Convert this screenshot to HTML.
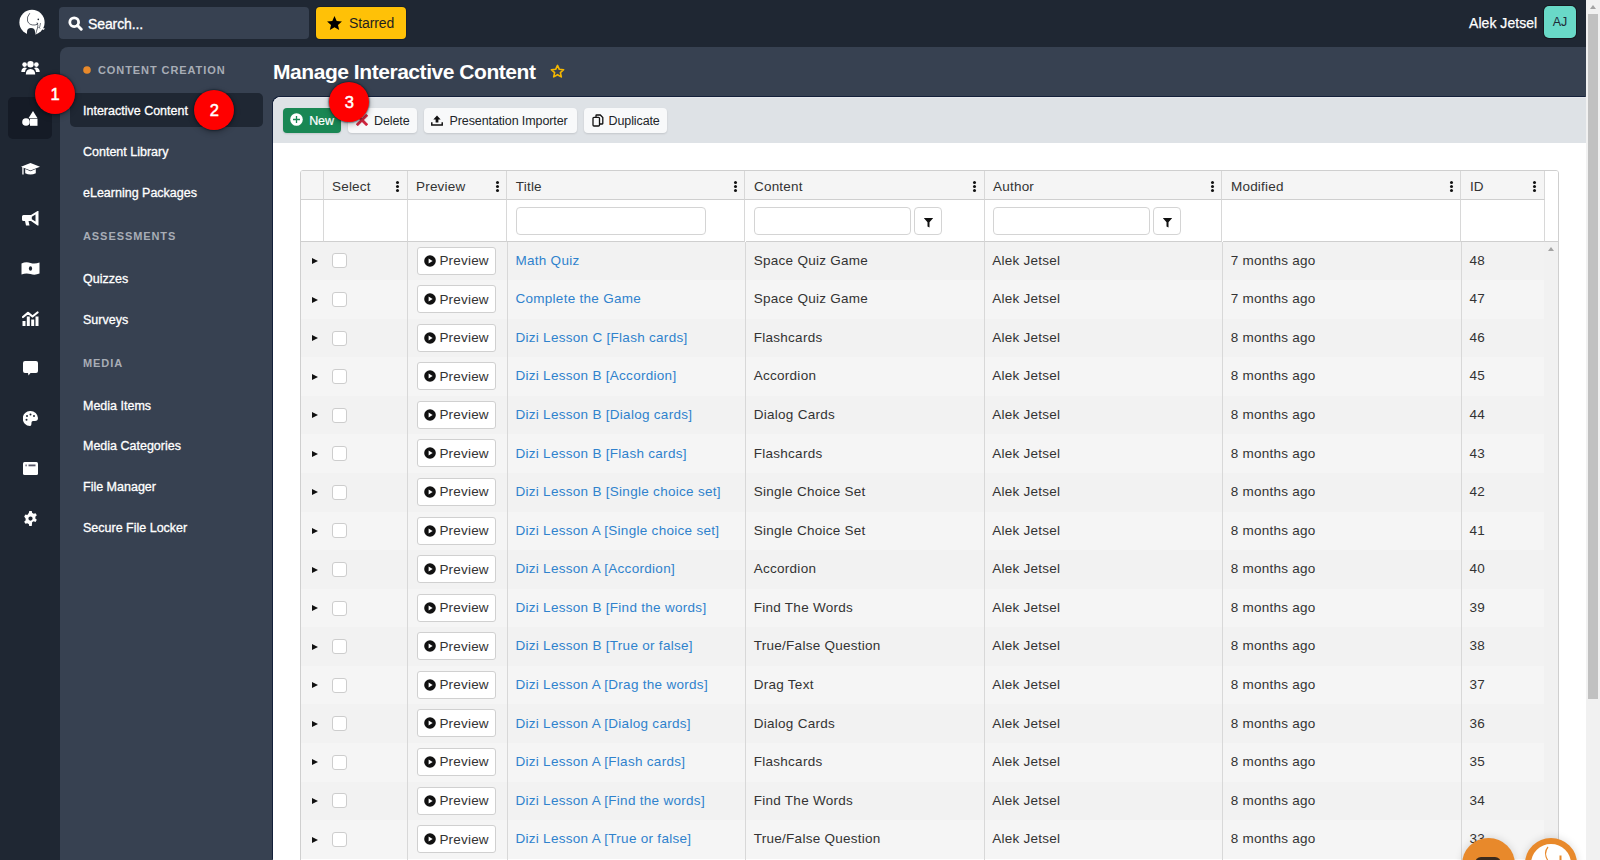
<!DOCTYPE html><html><head><meta charset="utf-8"><title>Manage Interactive Content</title><style>
*{box-sizing:border-box;margin:0;padding:0}
html,body{width:1600px;height:860px;overflow:hidden;background:#1f2733;font-family:"Liberation Sans",sans-serif}
.abs{position:absolute}
#rail{left:0;top:0;width:60px;height:860px;background:#1f2733}
#topbar{left:0;top:0;width:1586px;height:47px;background:#1f2733}
#panel{left:60px;top:47px;width:1526px;height:813px;background:#374151;border-top-left-radius:8px}
.search{left:59px;top:7px;width:250px;height:32px;background:#374151;border-radius:4px}
.search span{position:absolute;left:29px;top:7.7px;font-size:14px;color:#fff;-webkit-text-stroke:0.3px #fff;letter-spacing:-0.1px;line-height:18px}
.starred{left:316px;top:7px;width:90px;height:32px;background:#ffc107;border-radius:4px;box-shadow:0 0 0 1px #18202c}
.starred span{position:absolute;left:33px;top:7px;font-size:14px;color:#1f1f1f;letter-spacing:-0.1px;line-height:18px}
.uname{left:1469px;top:14px;font-size:14px;color:#fff;line-height:18px;letter-spacing:0.05px;-webkit-text-stroke:0.25px #fff}
.avatar{left:1544px;top:6.2px;width:32px;height:32px;background:#69d9c8;border-radius:5px;box-shadow:0 0 0 1px #16181f;color:#1f2937;font-size:12.5px;line-height:33px;text-align:center}
.activebox{left:8px;top:97px;width:44px;height:42px;background:#151b26;border-radius:5px}
.ic{position:absolute}
.sechead{position:absolute;left:83px;font-size:11px;font-weight:bold;color:#a8adb6;letter-spacing:0.92px;line-height:12px}
.nav{position:absolute;left:83px;font-size:12.5px;color:#fff;-webkit-text-stroke:0.3px #fff;letter-spacing:0px;line-height:14px}
.navact{left:70px;top:93px;width:193px;height:34px;background:#1f2733;border-radius:5px}
.title{left:273px;top:59.5px;font-size:21px;font-weight:bold;color:#fff;letter-spacing:-0.45px;line-height:24px}
#card{left:273px;top:97px;width:1313px;height:763px;background:#fff;border-top-left-radius:8px;box-shadow:-1px -1px 0 #14203a}
#toolbar{left:273px;top:97px;width:1313px;height:46px;background:#dee2e6;border-top-left-radius:8px;box-shadow:inset 0 1px 0 #e6e8ec}
.btn{position:absolute;top:107.5px;height:25px;border-radius:4px;background:#f8f9fa;box-shadow:0 1px 2px rgba(0,0,0,0.12);font-size:12.5px;color:#212529;line-height:25px;letter-spacing:-0.1px}
.btn span{position:absolute;top:0}
#tbl{left:300px;top:170px;width:1259px;height:700px;border:1px solid #cfcfcf;border-radius:3px;background:#fff;overflow:hidden}
.hdr{position:absolute;top:0;height:29px;background:#f5f5f5;border-bottom:1px solid #cfcfcf}
.hcell{position:absolute;top:0;height:29px;border-right:1px solid #d8d8d8;}
.htext{position:absolute;left:8.5px;top:7.5px;font-size:13.5px;color:#333;letter-spacing:0.2px;line-height:16px}
.keb{position:absolute;top:10px;width:3px;height:11px}
.keb i{position:absolute;left:0;width:3px;height:3px;border-radius:50%;background:#111}
.fcell{position:absolute;top:29px;height:42px;border-right:1px solid #d8d8d8;border-bottom:1px solid #cfcfcf}
.finput{position:absolute;top:7px;height:27.5px;border:1px solid #d4d4d4;border-radius:4px;background:#fff}
.fbtn{position:absolute;top:7px;height:27.5px;width:28px;border:1px solid #d4d4d4;border-radius:4px;background:#fff}
.row{position:absolute;left:0;width:1243px}
.rc{position:absolute;top:0;bottom:0}
.rt{position:absolute;font-size:13.5px;color:#333;letter-spacing:0.26px;line-height:16px}
.link{color:#2f82cd;letter-spacing:0.29px}
.vline{position:absolute;width:1px;background:#d8d8d8}
.tri{position:absolute;width:0;height:0;border-left:6.5px solid #111;border-top:3.5px solid transparent;border-bottom:3.5px solid transparent}
.cb{position:absolute;width:15px;height:15px;border:1px solid #cdcdcd;border-radius:3px;background:#fff}
.pbtn{position:absolute;width:78.8px;height:28px;border:1px solid #d0d0d0;border-radius:3px;background:#fff}
.pbtn span{position:absolute;left:21.5px;top:5.5px;font-size:13.5px;color:#333;letter-spacing:0.2px;line-height:16px}
.badge{position:absolute;width:40px;height:40px;border-radius:50%;background:#f00;color:#fff;font-size:16.5px;-webkit-text-stroke:0.5px #fff;text-align:center;line-height:40px;box-shadow:0 0 1.5px 1px rgba(0,20,30,0.45),0 2px 6px rgba(0,0,0,0.3)}
#sb{left:1586px;top:0;width:14px;height:860px;background:#f1f1f1}
#thumb{left:1588px;top:14px;width:10px;height:685px;background:#c1c1c1}
</style></head><body><div class="abs" id="rail"></div><div class="abs" id="topbar"></div><div class="abs" id="panel"></div><svg class="abs" style="left:16px;top:6px" width="32" height="32" viewBox="0 0 32 32">
<circle cx="16" cy="16.4" r="12.6" fill="#fff"/>
<path d="M11 29.5 V26 Q11 22 15 22 Q19 22 19 26 V29.5Z" fill="#1f2733"/>
<path d="M13.8 7.2 Q10.5 11 11.5 15 Q13 19.5 19 19 Q21.5 18.8 22 17" fill="none" stroke="#1f2733" stroke-width="0.7"/>
<circle cx="22.3" cy="13.4" r="0.8" fill="#1f2733"/>
<path d="M21 16.5 Q22.5 20 21.5 22 Q20.5 25 19.5 28.5" fill="none" stroke="#1f2733" stroke-width="0.7"/>
<path d="M24.5 17 Q24 20 23.5 21.5" fill="none" stroke="#1f2733" stroke-width="0.6"/>
<path d="M23.5 21.5 L29 22.5 L27.5 24 Z" fill="#fff"/>
<path d="M22.5 21 L24 22.5" fill="none" stroke="#1f2733" stroke-width="0.8"/>
</svg><div class="abs search"><svg class="abs" style="left:9px;top:8.5px" width="15" height="15" viewBox="0 0 15 15"><circle cx="6.2" cy="6.2" r="4.4" fill="none" stroke="#fff" stroke-width="2.8"/><path d="M9.5 9.5 L13.2 13.2" stroke="#fff" stroke-width="3" stroke-linecap="round"/></svg><span>Search...</span></div><div class="abs starred"><svg class="abs" style="left:9.5px;top:7.5px" width="17" height="17" viewBox="0 0 24 24"><path d="M12 1.5l3.1 7 7.4.6-5.6 4.9 1.7 7.3L12 17.4l-6.6 3.9 1.7-7.3L1.5 9.1l7.4-.6z" fill="#000"/></svg><span>Starred</span></div><div class="abs uname">Alek Jetsel</div><div class="abs avatar">AJ</div><div class="abs activebox"></div><svg class="ic" style="left:20.5px;top:61px" width="19" height="14" viewBox="0 0 19 14">
<circle cx="3.6" cy="3.6" r="2.3" fill="#fff"/><circle cx="15.4" cy="3.6" r="2.3" fill="#fff"/><circle cx="9.5" cy="3.2" r="3.2" fill="#fff"/>
<path d="M0.3 11 q0-4 3.3-4.6 q1.6 0 2.4 .6 q-2 1.4-2 4z" fill="#fff"/><path d="M18.7 11 q0-4-3.3-4.6 q-1.6 0-2.4 .6 q2 1.4 2 4z" fill="#fff"/>
<path d="M4.8 13.6 q0-5.4 4.7-5.6 q4.7.2 4.7 5.6z" fill="#fff"/></svg><svg class="ic" style="left:22px;top:110.5px" width="16" height="15" viewBox="0 0 16 15">
<path d="M11 0 L15.5 7.2 L6.5 7.2 Z" fill="#fff"/><circle cx="4" cy="11" r="3.8" fill="#fff"/><rect x="8" y="7.8" width="7.5" height="7" fill="#fff"/></svg><svg class="ic" style="left:20.5px;top:162.5px" width="19" height="12" viewBox="0 0 19 12">
<path d="M9.5 0 L19 3.8 L9.5 7.6 L0 3.8Z" fill="#fff"/><path d="M4.2 6 v4.2 q5.3 2.6 10.6 0 V6 L9.5 8.2Z" fill="#fff"/><rect x="1.3" y="4" width="1.3" height="7.5" fill="#fff"/></svg><svg class="ic" style="left:21.5px;top:210.5px" width="17" height="15" viewBox="0 0 17 15">
<path d="M15.5 0 L16.5 0 V14.5 L15.5 14.5 L9 10 H6.5 L7.5 14.5 H4 L3 10 H1.5 Q0 10 0 8.5 V5.5 Q0 4 1.5 4 H9Z M13.5 3.5 L9.8 5.8 V8.2 L13.5 10.6Z" fill="#fff" fill-rule="evenodd"/></svg><svg class="ic" style="left:20.5px;top:261.5px" width="19" height="13" viewBox="0 0 19 13">
<path d="M0.5 1.5 Q5 -0.5 9.5 1 Q14 2.3 18.5 0.5 V11.5 Q14 13.5 9.5 12 Q5 10.7 0.5 12.5Z" fill="#fff"/><ellipse cx="9.5" cy="6.5" rx="1.6" ry="2.2" fill="#1f2733"/></svg><svg class="ic" style="left:21.5px;top:310.5px" width="17" height="15" viewBox="0 0 17 15">
<path d="M1 6 L6 1.8 L10.5 5.5 L15.5 1.5" fill="none" stroke="#fff" stroke-width="2.2" stroke-linecap="round" stroke-linejoin="round"/>
<rect x="0.5" y="10" width="3" height="5" fill="#fff"/><rect x="4.8" y="5.5" width="3" height="9.5" fill="#fff"/><rect x="9.2" y="8.5" width="3" height="6.5" fill="#fff"/><rect x="13.5" y="5.5" width="3" height="9.5" fill="#fff"/></svg><svg class="ic" style="left:22.5px;top:360.5px" width="15" height="15" viewBox="0 0 15 15">
<path d="M2 0 H13 Q15 0 15 2 V10 Q15 12 13 12 H7.5 L5.5 14.5 L5 12 H2 Q0 12 0 10 V2 Q0 0 2 0Z" fill="#fff"/></svg><svg class="ic" style="left:22.5px;top:410.5px" width="15" height="15" viewBox="0 0 15 15">
<path d="M7.5 0 A7.5 7.5 0 0 1 15 7 Q15 10 12 10 H10 Q8.5 10 8.5 11.5 Q8.5 15 7 15 A7.5 7.5 0 0 1 7.5 0Z" fill="#fff"/>
<circle cx="7.5" cy="3.5" r="1" fill="#1f2733"/><circle cx="4" cy="5" r="1" fill="#1f2733"/><circle cx="11" cy="5" r="1" fill="#1f2733"/><circle cx="3.5" cy="8.8" r="1" fill="#1f2733"/></svg><svg class="ic" style="left:22.5px;top:461.5px" width="15" height="13" viewBox="0 0 15 13">
<rect x="0" y="0" width="15" height="13" rx="1.5" fill="#fff"/><rect x="2.5" y="2.5" width="1.2" height="1.8" fill="#556"/><rect x="5.5" y="2.5" width="7" height="1.8" fill="#556"/></svg><svg class="ic" style="left:22.5px;top:510.5px" width="15" height="15" viewBox="0 0 24 24">
<path fill="#fff" fill-rule="evenodd" d="M10 0h4l.7 3.2a9 9 0 0 1 2.3 1.3l3.1-1 2 3.4-2.4 2.2a9 9 0 0 1 0 2.7l2.4 2.2-2 3.4-3.1-1a9 9 0 0 1-2.3 1.3L14 24h-4l-.7-3.2a9 9 0 0 1-2.3-1.3l-3.1 1-2-3.4 2.4-2.2a9 9 0 0 1 0-2.7L1.9 8.9l2-3.4 3.1 1A9 9 0 0 1 9.3 3.2z M12 8.6a3.4 3.4 0 1 0 0 6.8 3.4 3.4 0 0 0 0-6.8z"/></svg><div class="abs navact"></div><svg class="abs" style="left:83px;top:66px" width="8" height="8"><circle cx="4" cy="4" r="3.8" fill="#e8892b"/></svg><div class="sechead" style="left:98px;top:64px">CONTENT CREATION</div><div class="nav" style="top:104px">Interactive Content</div><div class="nav" style="top:145px">Content Library</div><div class="nav" style="top:185.5px">eLearning Packages</div><div class="sechead" style="left:83px;top:230px">ASSESSMENTS</div><div class="nav" style="top:271.5px">Quizzes</div><div class="nav" style="top:312.75px">Surveys</div><div class="sechead" style="left:83px;top:356.5px">MEDIA</div><div class="nav" style="top:398.5px">Media Items</div><div class="nav" style="top:439px">Media Categories</div><div class="nav" style="top:480.25px">File Manager</div><div class="nav" style="top:520.75px">Secure File Locker</div><div class="abs title">Manage Interactive Content</div><svg class="abs" style="left:549.5px;top:64px" width="15" height="15" viewBox="0 0 24 24"><path d="M12 2.2l2.9 6.3 6.9.7-5.2 4.6 1.5 6.8L12 17.1l-6.1 3.5 1.5-6.8L2.2 9.2l6.9-.7z" fill="none" stroke="#f5b700" stroke-width="2.6" stroke-linejoin="round"/></svg><div class="abs" id="card"></div><div class="abs" id="toolbar"></div><div class="btn" style="left:283.2px;width:58.3px;background:#198754;color:#fff"><svg class="abs" style="left:7px;top:5.2px" width="13" height="13" viewBox="0 0 13 13"><circle cx="6.5" cy="6.5" r="6.3" fill="#fff"/><path d="M6.5 3v7M3 6.5h7" stroke="#198754" stroke-width="1.3"/></svg><span style="left:26px;top:1.5px;-webkit-text-stroke:0.2px #fff">New</span></div><div class="btn" style="left:348px;width:69px"><svg class="abs" style="left:7.5px;top:6px" width="12" height="12" viewBox="0 0 12 12"><path d="M1.8 1.8 L10.2 10.2 M10.2 1.8 L1.8 10.2" stroke="#d2263f" stroke-width="2.8" stroke-linecap="square"/></svg><span style="left:26px;top:1.5px">Delete</span></div><div class="btn" style="left:423.5px;width:153.5px"><svg class="abs" style="left:7.5px;top:7px" width="12" height="11" viewBox="0 0 13 12"><path d="M6.5 0.5 L10.5 4.8 H8 V8.3 H5 V4.8 H2.5Z" fill="#111"/><path d="M0.8 8 V11 H12.2 V8" fill="none" stroke="#111" stroke-width="1.6"/></svg><span style="left:26px;top:1.5px">Presentation Importer</span></div><div class="btn" style="left:584px;width:83px"><svg class="abs" style="left:8px;top:6px" width="12" height="13" viewBox="0 0 12 13"><rect x="1" y="3.3" width="6.5" height="8.7" rx="1" fill="none" stroke="#111" stroke-width="1.3"/><path d="M4 3.3 V1.5 Q4 1 4.5 1 H8.3 L10.8 3.5 V9.5 Q10.8 10 10.3 10 H7.5" fill="none" stroke="#111" stroke-width="1.3"/></svg><span style="left:24.5px;top:1.5px">Duplicate</span></div><div class="abs" id="tbl"><div class="abs" style="left:0;top:0;width:1244px;height:29px;background:#f5f5f5;border-bottom:1px solid #cfcfcf"></div><div class="hcell hdr" style="left:0.00px;width:22.50px"></div><div class="fcell" style="left:0.00px;width:22.50px"></div><div class="hcell hdr" style="left:22.50px;width:84.00px"><div class="htext">Select</div><div class="keb" style="left:72.70px"><i style="top:0"></i><i style="top:4px"></i><i style="top:8px"></i></div></div><div class="fcell" style="left:22.50px;width:84.00px"></div><div class="hcell hdr" style="left:106.50px;width:99.80px"><div class="htext">Preview</div><div class="keb" style="left:88.50px"><i style="top:0"></i><i style="top:4px"></i><i style="top:8px"></i></div></div><div class="fcell" style="left:106.50px;width:99.80px"></div><div class="hcell hdr" style="left:206.30px;width:238.20px"><div class="htext">Title</div><div class="keb" style="left:226.90px"><i style="top:0"></i><i style="top:4px"></i><i style="top:8px"></i></div></div><div class="fcell" style="left:206.30px;width:238.20px"><div class="finput" style="left:8.5px;width:190px"></div></div><div class="hcell hdr" style="left:444.50px;width:239.10px"><div class="htext">Content</div><div class="keb" style="left:227.80px"><i style="top:0"></i><i style="top:4px"></i><i style="top:8px"></i></div></div><div class="fcell" style="left:444.50px;width:239.10px"><div class="finput" style="left:8.5px;width:157px"></div><div class="fbtn" style="left:168.5px"><svg class="abs" style="left:8px;top:8.5px" width="11" height="11" viewBox="0 0 11 11"><path d="M0.8 1 H10.2 L6.5 5.2 V10.5 L4.5 9.5 V5.2Z" fill="#111"/></svg></div></div><div class="hcell hdr" style="left:683.60px;width:237.90px"><div class="htext">Author</div><div class="keb" style="left:226.60px"><i style="top:0"></i><i style="top:4px"></i><i style="top:8px"></i></div></div><div class="fcell" style="left:683.60px;width:237.90px"><div class="finput" style="left:8.5px;width:157px"></div><div class="fbtn" style="left:168.5px"><svg class="abs" style="left:8px;top:8.5px" width="11" height="11" viewBox="0 0 11 11"><path d="M0.8 1 H10.2 L6.5 5.2 V10.5 L4.5 9.5 V5.2Z" fill="#111"/></svg></div></div><div class="hcell hdr" style="left:921.50px;width:238.90px"><div class="htext">Modified</div><div class="keb" style="left:227.60px"><i style="top:0"></i><i style="top:4px"></i><i style="top:8px"></i></div></div><div class="fcell" style="left:921.50px;width:238.90px"></div><div class="hcell hdr" style="left:1160.40px;width:83.30px"><div class="htext">ID</div><div class="keb" style="left:72.00px"><i style="top:0"></i><i style="top:4px"></i><i style="top:8px"></i></div></div><div class="fcell" style="left:1160.40px;width:83.30px"></div><div class="abs" style="left:1244px;top:0;width:15px;height:71px;background:#fff;border-bottom:1px solid #cfcfcf"></div><div class="row" style="top:70.60px;height:38.57px;background:#f2f2f2"><div class="tri" style="left:11.2px;top:16.48px"></div><div class="cb" style="left:31.0px;top:11.79px"></div><div class="pbtn" style="left:115.9px;top:4.98px"><svg class="abs" style="left:6px;top:7px" width="12" height="12" viewBox="0 0 12 12"><circle cx="6" cy="6" r="5.8" fill="#111"/><path d="M4.6 3.4 L8.6 6 L4.6 8.6Z" fill="#fff"/></svg><span>Preview</span></div><div class="rt link" style="left:214.4px;top:11.09px">Math Quiz</div><div class="rt" style="left:452.8px;top:11.09px">Space Quiz Game</div><div class="rt" style="left:691.2px;top:11.09px">Alek Jetsel</div><div class="rt" style="left:929.7px;top:11.09px">7 months ago</div><div class="rt" style="left:1168.4px;top:11.09px">48</div></div><div class="row" style="top:109.17px;height:38.57px;background:#f5f5f5"><div class="tri" style="left:11.2px;top:16.48px"></div><div class="cb" style="left:31.0px;top:11.79px"></div><div class="pbtn" style="left:115.9px;top:4.98px"><svg class="abs" style="left:6px;top:7px" width="12" height="12" viewBox="0 0 12 12"><circle cx="6" cy="6" r="5.8" fill="#111"/><path d="M4.6 3.4 L8.6 6 L4.6 8.6Z" fill="#fff"/></svg><span>Preview</span></div><div class="rt link" style="left:214.4px;top:11.09px">Complete the Game</div><div class="rt" style="left:452.8px;top:11.09px">Space Quiz Game</div><div class="rt" style="left:691.2px;top:11.09px">Alek Jetsel</div><div class="rt" style="left:929.7px;top:11.09px">7 months ago</div><div class="rt" style="left:1168.4px;top:11.09px">47</div></div><div class="row" style="top:147.74px;height:38.57px;background:#f2f2f2"><div class="tri" style="left:11.2px;top:16.48px"></div><div class="cb" style="left:31.0px;top:11.79px"></div><div class="pbtn" style="left:115.9px;top:4.98px"><svg class="abs" style="left:6px;top:7px" width="12" height="12" viewBox="0 0 12 12"><circle cx="6" cy="6" r="5.8" fill="#111"/><path d="M4.6 3.4 L8.6 6 L4.6 8.6Z" fill="#fff"/></svg><span>Preview</span></div><div class="rt link" style="left:214.4px;top:11.09px">Dizi Lesson C [Flash cards]</div><div class="rt" style="left:452.8px;top:11.09px">Flashcards</div><div class="rt" style="left:691.2px;top:11.09px">Alek Jetsel</div><div class="rt" style="left:929.7px;top:11.09px">8 months ago</div><div class="rt" style="left:1168.4px;top:11.09px">46</div></div><div class="row" style="top:186.31px;height:38.57px;background:#f5f5f5"><div class="tri" style="left:11.2px;top:16.48px"></div><div class="cb" style="left:31.0px;top:11.79px"></div><div class="pbtn" style="left:115.9px;top:4.98px"><svg class="abs" style="left:6px;top:7px" width="12" height="12" viewBox="0 0 12 12"><circle cx="6" cy="6" r="5.8" fill="#111"/><path d="M4.6 3.4 L8.6 6 L4.6 8.6Z" fill="#fff"/></svg><span>Preview</span></div><div class="rt link" style="left:214.4px;top:11.09px">Dizi Lesson B [Accordion]</div><div class="rt" style="left:452.8px;top:11.09px">Accordion</div><div class="rt" style="left:691.2px;top:11.09px">Alek Jetsel</div><div class="rt" style="left:929.7px;top:11.09px">8 months ago</div><div class="rt" style="left:1168.4px;top:11.09px">45</div></div><div class="row" style="top:224.88px;height:38.57px;background:#f2f2f2"><div class="tri" style="left:11.2px;top:16.48px"></div><div class="cb" style="left:31.0px;top:11.79px"></div><div class="pbtn" style="left:115.9px;top:4.98px"><svg class="abs" style="left:6px;top:7px" width="12" height="12" viewBox="0 0 12 12"><circle cx="6" cy="6" r="5.8" fill="#111"/><path d="M4.6 3.4 L8.6 6 L4.6 8.6Z" fill="#fff"/></svg><span>Preview</span></div><div class="rt link" style="left:214.4px;top:11.09px">Dizi Lesson B [Dialog cards]</div><div class="rt" style="left:452.8px;top:11.09px">Dialog Cards</div><div class="rt" style="left:691.2px;top:11.09px">Alek Jetsel</div><div class="rt" style="left:929.7px;top:11.09px">8 months ago</div><div class="rt" style="left:1168.4px;top:11.09px">44</div></div><div class="row" style="top:263.45px;height:38.57px;background:#f5f5f5"><div class="tri" style="left:11.2px;top:16.48px"></div><div class="cb" style="left:31.0px;top:11.79px"></div><div class="pbtn" style="left:115.9px;top:4.98px"><svg class="abs" style="left:6px;top:7px" width="12" height="12" viewBox="0 0 12 12"><circle cx="6" cy="6" r="5.8" fill="#111"/><path d="M4.6 3.4 L8.6 6 L4.6 8.6Z" fill="#fff"/></svg><span>Preview</span></div><div class="rt link" style="left:214.4px;top:11.09px">Dizi Lesson B [Flash cards]</div><div class="rt" style="left:452.8px;top:11.09px">Flashcards</div><div class="rt" style="left:691.2px;top:11.09px">Alek Jetsel</div><div class="rt" style="left:929.7px;top:11.09px">8 months ago</div><div class="rt" style="left:1168.4px;top:11.09px">43</div></div><div class="row" style="top:302.02px;height:38.57px;background:#f2f2f2"><div class="tri" style="left:11.2px;top:16.48px"></div><div class="cb" style="left:31.0px;top:11.79px"></div><div class="pbtn" style="left:115.9px;top:4.98px"><svg class="abs" style="left:6px;top:7px" width="12" height="12" viewBox="0 0 12 12"><circle cx="6" cy="6" r="5.8" fill="#111"/><path d="M4.6 3.4 L8.6 6 L4.6 8.6Z" fill="#fff"/></svg><span>Preview</span></div><div class="rt link" style="left:214.4px;top:11.09px">Dizi Lesson B [Single choice set]</div><div class="rt" style="left:452.8px;top:11.09px">Single Choice Set</div><div class="rt" style="left:691.2px;top:11.09px">Alek Jetsel</div><div class="rt" style="left:929.7px;top:11.09px">8 months ago</div><div class="rt" style="left:1168.4px;top:11.09px">42</div></div><div class="row" style="top:340.59px;height:38.57px;background:#f5f5f5"><div class="tri" style="left:11.2px;top:16.48px"></div><div class="cb" style="left:31.0px;top:11.79px"></div><div class="pbtn" style="left:115.9px;top:4.98px"><svg class="abs" style="left:6px;top:7px" width="12" height="12" viewBox="0 0 12 12"><circle cx="6" cy="6" r="5.8" fill="#111"/><path d="M4.6 3.4 L8.6 6 L4.6 8.6Z" fill="#fff"/></svg><span>Preview</span></div><div class="rt link" style="left:214.4px;top:11.09px">Dizi Lesson A [Single choice set]</div><div class="rt" style="left:452.8px;top:11.09px">Single Choice Set</div><div class="rt" style="left:691.2px;top:11.09px">Alek Jetsel</div><div class="rt" style="left:929.7px;top:11.09px">8 months ago</div><div class="rt" style="left:1168.4px;top:11.09px">41</div></div><div class="row" style="top:379.16px;height:38.57px;background:#f2f2f2"><div class="tri" style="left:11.2px;top:16.48px"></div><div class="cb" style="left:31.0px;top:11.79px"></div><div class="pbtn" style="left:115.9px;top:4.98px"><svg class="abs" style="left:6px;top:7px" width="12" height="12" viewBox="0 0 12 12"><circle cx="6" cy="6" r="5.8" fill="#111"/><path d="M4.6 3.4 L8.6 6 L4.6 8.6Z" fill="#fff"/></svg><span>Preview</span></div><div class="rt link" style="left:214.4px;top:11.09px">Dizi Lesson A [Accordion]</div><div class="rt" style="left:452.8px;top:11.09px">Accordion</div><div class="rt" style="left:691.2px;top:11.09px">Alek Jetsel</div><div class="rt" style="left:929.7px;top:11.09px">8 months ago</div><div class="rt" style="left:1168.4px;top:11.09px">40</div></div><div class="row" style="top:417.73px;height:38.57px;background:#f5f5f5"><div class="tri" style="left:11.2px;top:16.48px"></div><div class="cb" style="left:31.0px;top:11.79px"></div><div class="pbtn" style="left:115.9px;top:4.98px"><svg class="abs" style="left:6px;top:7px" width="12" height="12" viewBox="0 0 12 12"><circle cx="6" cy="6" r="5.8" fill="#111"/><path d="M4.6 3.4 L8.6 6 L4.6 8.6Z" fill="#fff"/></svg><span>Preview</span></div><div class="rt link" style="left:214.4px;top:11.09px">Dizi Lesson B [Find the words]</div><div class="rt" style="left:452.8px;top:11.09px">Find The Words</div><div class="rt" style="left:691.2px;top:11.09px">Alek Jetsel</div><div class="rt" style="left:929.7px;top:11.09px">8 months ago</div><div class="rt" style="left:1168.4px;top:11.09px">39</div></div><div class="row" style="top:456.30px;height:38.57px;background:#f2f2f2"><div class="tri" style="left:11.2px;top:16.48px"></div><div class="cb" style="left:31.0px;top:11.79px"></div><div class="pbtn" style="left:115.9px;top:4.98px"><svg class="abs" style="left:6px;top:7px" width="12" height="12" viewBox="0 0 12 12"><circle cx="6" cy="6" r="5.8" fill="#111"/><path d="M4.6 3.4 L8.6 6 L4.6 8.6Z" fill="#fff"/></svg><span>Preview</span></div><div class="rt link" style="left:214.4px;top:11.09px">Dizi Lesson B [True or false]</div><div class="rt" style="left:452.8px;top:11.09px">True/False Question</div><div class="rt" style="left:691.2px;top:11.09px">Alek Jetsel</div><div class="rt" style="left:929.7px;top:11.09px">8 months ago</div><div class="rt" style="left:1168.4px;top:11.09px">38</div></div><div class="row" style="top:494.87px;height:38.57px;background:#f5f5f5"><div class="tri" style="left:11.2px;top:16.48px"></div><div class="cb" style="left:31.0px;top:11.79px"></div><div class="pbtn" style="left:115.9px;top:4.98px"><svg class="abs" style="left:6px;top:7px" width="12" height="12" viewBox="0 0 12 12"><circle cx="6" cy="6" r="5.8" fill="#111"/><path d="M4.6 3.4 L8.6 6 L4.6 8.6Z" fill="#fff"/></svg><span>Preview</span></div><div class="rt link" style="left:214.4px;top:11.09px">Dizi Lesson A [Drag the words]</div><div class="rt" style="left:452.8px;top:11.09px">Drag Text</div><div class="rt" style="left:691.2px;top:11.09px">Alek Jetsel</div><div class="rt" style="left:929.7px;top:11.09px">8 months ago</div><div class="rt" style="left:1168.4px;top:11.09px">37</div></div><div class="row" style="top:533.44px;height:38.57px;background:#f2f2f2"><div class="tri" style="left:11.2px;top:16.48px"></div><div class="cb" style="left:31.0px;top:11.79px"></div><div class="pbtn" style="left:115.9px;top:4.98px"><svg class="abs" style="left:6px;top:7px" width="12" height="12" viewBox="0 0 12 12"><circle cx="6" cy="6" r="5.8" fill="#111"/><path d="M4.6 3.4 L8.6 6 L4.6 8.6Z" fill="#fff"/></svg><span>Preview</span></div><div class="rt link" style="left:214.4px;top:11.09px">Dizi Lesson A [Dialog cards]</div><div class="rt" style="left:452.8px;top:11.09px">Dialog Cards</div><div class="rt" style="left:691.2px;top:11.09px">Alek Jetsel</div><div class="rt" style="left:929.7px;top:11.09px">8 months ago</div><div class="rt" style="left:1168.4px;top:11.09px">36</div></div><div class="row" style="top:572.01px;height:38.57px;background:#f5f5f5"><div class="tri" style="left:11.2px;top:16.48px"></div><div class="cb" style="left:31.0px;top:11.79px"></div><div class="pbtn" style="left:115.9px;top:4.98px"><svg class="abs" style="left:6px;top:7px" width="12" height="12" viewBox="0 0 12 12"><circle cx="6" cy="6" r="5.8" fill="#111"/><path d="M4.6 3.4 L8.6 6 L4.6 8.6Z" fill="#fff"/></svg><span>Preview</span></div><div class="rt link" style="left:214.4px;top:11.09px">Dizi Lesson A [Flash cards]</div><div class="rt" style="left:452.8px;top:11.09px">Flashcards</div><div class="rt" style="left:691.2px;top:11.09px">Alek Jetsel</div><div class="rt" style="left:929.7px;top:11.09px">8 months ago</div><div class="rt" style="left:1168.4px;top:11.09px">35</div></div><div class="row" style="top:610.58px;height:38.57px;background:#f2f2f2"><div class="tri" style="left:11.2px;top:16.48px"></div><div class="cb" style="left:31.0px;top:11.79px"></div><div class="pbtn" style="left:115.9px;top:4.98px"><svg class="abs" style="left:6px;top:7px" width="12" height="12" viewBox="0 0 12 12"><circle cx="6" cy="6" r="5.8" fill="#111"/><path d="M4.6 3.4 L8.6 6 L4.6 8.6Z" fill="#fff"/></svg><span>Preview</span></div><div class="rt link" style="left:214.4px;top:11.09px">Dizi Lesson A [Find the words]</div><div class="rt" style="left:452.8px;top:11.09px">Find The Words</div><div class="rt" style="left:691.2px;top:11.09px">Alek Jetsel</div><div class="rt" style="left:929.7px;top:11.09px">8 months ago</div><div class="rt" style="left:1168.4px;top:11.09px">34</div></div><div class="row" style="top:649.15px;height:38.57px;background:#f5f5f5"><div class="tri" style="left:11.2px;top:16.48px"></div><div class="cb" style="left:31.0px;top:11.79px"></div><div class="pbtn" style="left:115.9px;top:4.98px"><svg class="abs" style="left:6px;top:7px" width="12" height="12" viewBox="0 0 12 12"><circle cx="6" cy="6" r="5.8" fill="#111"/><path d="M4.6 3.4 L8.6 6 L4.6 8.6Z" fill="#fff"/></svg><span>Preview</span></div><div class="rt link" style="left:214.4px;top:11.09px">Dizi Lesson A [True or false]</div><div class="rt" style="left:452.8px;top:11.09px">True/False Question</div><div class="rt" style="left:691.2px;top:11.09px">Alek Jetsel</div><div class="rt" style="left:929.7px;top:11.09px">8 months ago</div><div class="rt" style="left:1168.4px;top:11.09px">33</div></div><div class="vline" style="left:106.00px;top:71px;height:700px"></div><div class="vline" style="left:205.80px;top:71px;height:700px"></div><div class="vline" style="left:444.00px;top:71px;height:700px"></div><div class="vline" style="left:683.10px;top:71px;height:700px"></div><div class="vline" style="left:921.00px;top:71px;height:700px"></div><div class="vline" style="left:1159.90px;top:71px;height:700px"></div><div class="abs" style="left:1243px;top:71px;width:16px;height:700px;background:#f1f1f1"></div><div class="abs" style="left:1247.00px;top:76px;width:0;height:0;border-left:3.5px solid transparent;border-right:3.5px solid transparent;border-bottom:4px solid #a3a3a3"></div></div><div class="badge" style="left:35.0px;top:74.4px">1</div><div class="badge" style="left:194.4px;top:90.0px">2</div><div class="badge" style="left:329.4px;top:81.6px">3</div><div class="abs" style="left:1462px;top:838.4px;width:52.5px;height:52.5px;border-radius:50%;background:#e8892b;box-shadow:0 0 8px rgba(0,0,0,0.15)"><div class="abs" style="left:13px;top:19px;width:26px;height:20px;border-radius:6px;background:#3b2a1c"></div></div><div class="abs" style="left:1525px;top:838.4px;width:52px;height:52px;border-radius:50%;background:#fff;border:6.5px solid #e8892b;box-shadow:0 0 8px rgba(0,0,0,0.15)"><svg class="abs" style="left:0px;top:0px" width="38" height="38" viewBox="0 0 38 38"><path d="M17 3 q-5 6 0 14" fill="none" stroke="#e8892b" stroke-width="1.2"/><rect x="28.5" y="11.5" width="2" height="8" fill="#e8892b"/></svg></div><div class="abs" id="sb"></div><div class="abs" id="thumb"></div><div class="abs" style="left:1589.5px;top:5px;width:0;height:0;border-left:3.5px solid transparent;border-right:3.5px solid transparent;border-bottom:4px solid #a3a3a3"></div></body></html>
